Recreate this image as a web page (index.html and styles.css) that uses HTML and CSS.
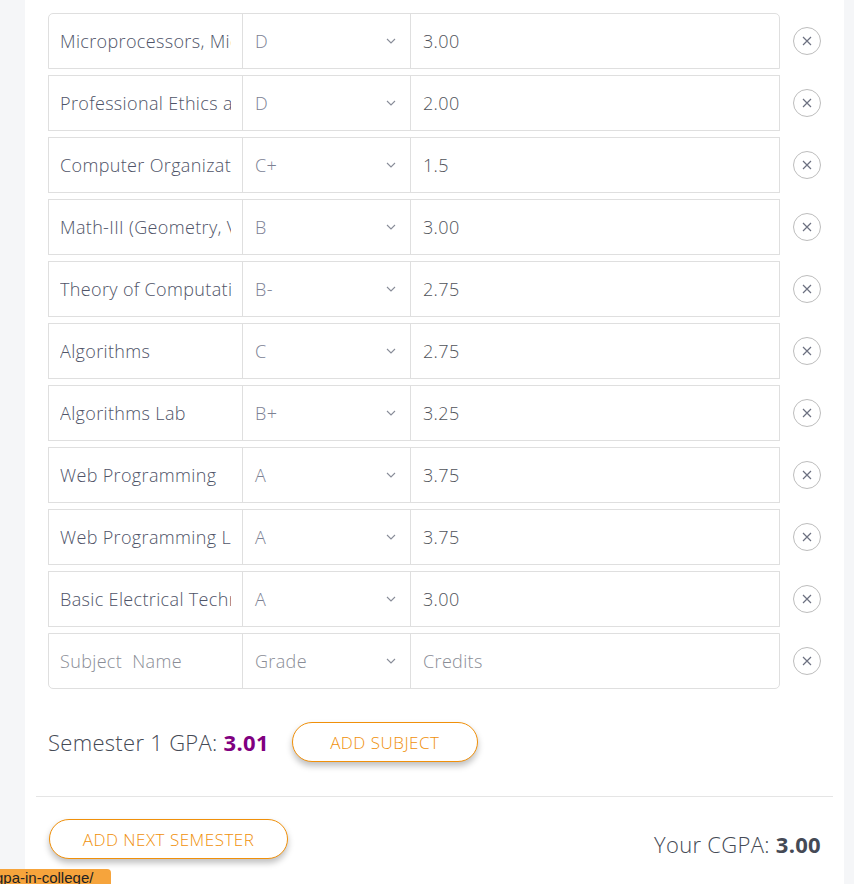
FILE: index.html
```html
<!DOCTYPE html>
<html>
<head>
<meta charset="utf-8">
<link rel="stylesheet" href="styles.css">
</head>
<body>
<div class="card">
  <div class="subjects">
    <div class="row first">
      <div class="group">
        <div class="cell name"><span class="clip">Microprocessors, Microcontrollers</span></div>
        <div class="cell grade">D<svg class="chev" viewBox="0 0 10 6"><path d="M1 1l4 4 4-4"/></svg></div>
        <div class="cell credits">3.00</div>
      </div>
      <button class="remove"><svg viewBox="0 0 10 10"><path d="M1 1l8 8M9 1l-8 8"/></svg></button>
    </div>
    <div class="row">
      <div class="group">
        <div class="cell name"><span class="clip">Professional Ethics and Values</span></div>
        <div class="cell grade">D<svg class="chev" viewBox="0 0 10 6"><path d="M1 1l4 4 4-4"/></svg></div>
        <div class="cell credits">2.00</div>
      </div>
      <button class="remove"><svg viewBox="0 0 10 10"><path d="M1 1l8 8M9 1l-8 8"/></svg></button>
    </div>
    <div class="row">
      <div class="group">
        <div class="cell name"><span class="clip">Computer Organization</span></div>
        <div class="cell grade">C+<svg class="chev" viewBox="0 0 10 6"><path d="M1 1l4 4 4-4"/></svg></div>
        <div class="cell credits">1.5</div>
      </div>
      <button class="remove"><svg viewBox="0 0 10 10"><path d="M1 1l8 8M9 1l-8 8"/></svg></button>
    </div>
    <div class="row">
      <div class="group">
        <div class="cell name"><span class="clip">Math-III (Geometry, Vectors)</span></div>
        <div class="cell grade">B<svg class="chev" viewBox="0 0 10 6"><path d="M1 1l4 4 4-4"/></svg></div>
        <div class="cell credits">3.00</div>
      </div>
      <button class="remove"><svg viewBox="0 0 10 10"><path d="M1 1l8 8M9 1l-8 8"/></svg></button>
    </div>
    <div class="row">
      <div class="group">
        <div class="cell name"><span class="clip">Theory of Computation</span></div>
        <div class="cell grade">B-<svg class="chev" viewBox="0 0 10 6"><path d="M1 1l4 4 4-4"/></svg></div>
        <div class="cell credits">2.75</div>
      </div>
      <button class="remove"><svg viewBox="0 0 10 10"><path d="M1 1l8 8M9 1l-8 8"/></svg></button>
    </div>
    <div class="row">
      <div class="group">
        <div class="cell name"><span class="clip">Algorithms</span></div>
        <div class="cell grade">C<svg class="chev" viewBox="0 0 10 6"><path d="M1 1l4 4 4-4"/></svg></div>
        <div class="cell credits">2.75</div>
      </div>
      <button class="remove"><svg viewBox="0 0 10 10"><path d="M1 1l8 8M9 1l-8 8"/></svg></button>
    </div>
    <div class="row">
      <div class="group">
        <div class="cell name"><span class="clip">Algorithms Lab</span></div>
        <div class="cell grade">B+<svg class="chev" viewBox="0 0 10 6"><path d="M1 1l4 4 4-4"/></svg></div>
        <div class="cell credits">3.25</div>
      </div>
      <button class="remove"><svg viewBox="0 0 10 10"><path d="M1 1l8 8M9 1l-8 8"/></svg></button>
    </div>
    <div class="row">
      <div class="group">
        <div class="cell name"><span class="clip">Web Programming</span></div>
        <div class="cell grade">A<svg class="chev" viewBox="0 0 10 6"><path d="M1 1l4 4 4-4"/></svg></div>
        <div class="cell credits">3.75</div>
      </div>
      <button class="remove"><svg viewBox="0 0 10 10"><path d="M1 1l8 8M9 1l-8 8"/></svg></button>
    </div>
    <div class="row">
      <div class="group">
        <div class="cell name"><span class="clip">Web Programming Lab</span></div>
        <div class="cell grade">A<svg class="chev" viewBox="0 0 10 6"><path d="M1 1l4 4 4-4"/></svg></div>
        <div class="cell credits">3.75</div>
      </div>
      <button class="remove"><svg viewBox="0 0 10 10"><path d="M1 1l8 8M9 1l-8 8"/></svg></button>
    </div>
    <div class="row">
      <div class="group">
        <div class="cell name"><span class="clip">Basic Electrical Technology</span></div>
        <div class="cell grade">A<svg class="chev" viewBox="0 0 10 6"><path d="M1 1l4 4 4-4"/></svg></div>
        <div class="cell credits">3.00</div>
      </div>
      <button class="remove"><svg viewBox="0 0 10 10"><path d="M1 1l8 8M9 1l-8 8"/></svg></button>
    </div>
    <div class="row last">
      <div class="group">
        <div class="cell name placeholder"><span class="clip">Subject&nbsp; Name</span></div>
        <div class="cell grade placeholder">Grade<svg class="chev" viewBox="0 0 10 6"><path d="M1 1l4 4 4-4"/></svg></div>
        <div class="cell credits placeholder">Credits</div>
      </div>
      <button class="remove"><svg viewBox="0 0 10 10"><path d="M1 1l8 8M9 1l-8 8"/></svg></button>
    </div>
  </div>

  <div class="sem-footer">
    <div class="gpa">Semester 1 GPA: <b class="gpa-val">3.01</b></div>
    <button class="pill add-subject">ADD SUBJECT</button>
  </div>

  <hr class="divider">

  <div class="cgpa-bar">
    <button class="pill add-sem">ADD NEXT SEMESTER</button>
    <div class="cgpa">Your CGPA: <b>3.00</b></div>
  </div>
</div>
<div class="status">gpa-in-college/</div>
</body>
</html>
```
FILE: styles.css
```css
html, body {
  margin: 0;
  padding: 0;
}
body {
  background: #f5f6f8;
  font-family: "Open Sans", "Liberation Sans", sans-serif;
  height: 884px;
  overflow: hidden;
}
.card {
  background: #fff;
  margin-left: 25px;
  width: 819px;
  padding: 13px 23px 30px 23px;
  box-sizing: border-box;
  min-height: 884px;
}
.subjects {
  display: flex;
  flex-direction: column;
  gap: 6px;
}
.row {
  display: flex;
  align-items: center;
  gap: 13px;
}
.group {
  flex: 1;
  display: flex;
  height: 56px;
  border: 1px solid #dfdfdf;
  box-sizing: border-box;
}
.row.first .group { border-radius: 5px 5px 0 0; }
.row.last .group { border-radius: 0 0 5px 5px; }
.cell {
  display: flex;
  align-items: center;
  padding: 0 12px;
  box-sizing: border-box;
  font-size: 18px;
  font-weight: 300;
  letter-spacing: 0.35px;
  white-space: nowrap;
  overflow: hidden;
}
.clip {
  display: block;
  overflow: hidden;
  white-space: nowrap;
  flex: 1;
}
.name {
  width: 194px;
  color: #4f5468;
  padding-left: 11px;
  padding-right: 11px;
  border-right: 1px solid #dfdfdf;
}
.grade {
  width: 168px;
  color: #7c8193;
  justify-content: space-between;
  border-right: 1px solid #dfdfdf;
  padding-right: 14px;
}
.credits {
  flex: 1;
  color: #50535a;
}
.placeholder { color: #8a8d96; }
.chev {
  width: 10px;
  height: 6px;
  fill: none;
  stroke: #888c98;
  stroke-width: 1.1;
}
.remove {
  width: 28px;
  height: 28px;
  border-radius: 50%;
  border: 1px solid #bdbdbd;
  background: #fff;
  padding: 0;
  display: flex;
  align-items: center;
  justify-content: center;
}
.remove svg {
  width: 10px;
  height: 10px;
  stroke: #6c7080;
  stroke-width: 1.2;
  fill: none;
}
.sem-footer {
  display: flex;
  align-items: center;
  gap: 23px;
  margin-top: 33px;
}
.gpa {
  font-size: 22px;
  font-weight: 300;
  letter-spacing: 0.3px;
  color: #454a55;
}
.gpa-val {
  color: #800080;
  font-weight: 700;
}
.pill {
  background: #fff;
  border: 1px solid #f0900a;
  color: #f0900a;
  border-radius: 20px;
  height: 40px;
  font-family: inherit;
  font-size: 17px;
  font-weight: 300;
  letter-spacing: 0.5px;
  box-shadow: 0 4px 6px rgba(0,0,0,0.25);
  padding: 0;
}
.add-subject { width: 186px; }
.divider {
  border: 0;
  border-top: 1px solid #e5e5e5;
  margin: 34px -12px 0 -12px;
}
.cgpa-bar {
  display: flex;
  align-items: center;
  justify-content: space-between;
  margin-top: 22px;
}
.add-sem { width: 239px; margin-left: 1px; }
.cgpa {
  font-size: 22px;
  font-weight: 300;
  letter-spacing: 0.3px;
  color: #454a55;
  margin-top: 10px;
}
.cgpa b { font-weight: 700; color: #454a55; }
.status {
  position: absolute;
  left: 0;
  top: 869px;
  width: 111px;
  height: 20px;
  background: #f6a43c;
  border-radius: 0 4px 0 0;
  font-family: "Liberation Sans", sans-serif;
  font-size: 15px;
  color: #222;
  text-indent: -5px;
  overflow: hidden;
  line-height: 18px;
  white-space: nowrap;
}
```
